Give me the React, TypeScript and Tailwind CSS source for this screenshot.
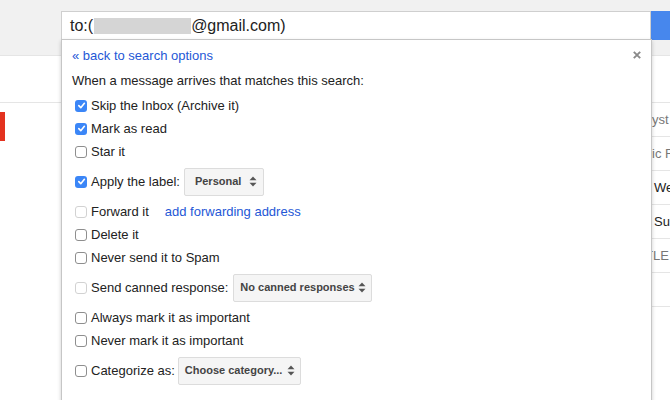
import React from "react";

type Opt = {
  label: string;
  checked?: boolean;
  disabled?: boolean;
  extra?: React.ReactNode;
  tall?: boolean;
};

function Box({ checked, disabled }: { checked?: boolean; disabled?: boolean }) {
  if (checked) {
    return (
      <span className="flex h-[12px] w-[12px] shrink-0 items-center justify-center rounded-[3px] bg-[#3b86f7]">
        <svg width="9" height="9" viewBox="0 0 10 10">
          <path d="M2 5.2 L4.2 7.4 L8.2 2.6" fill="none" stroke="#fff" strokeWidth="1.8" strokeLinecap="round" strokeLinejoin="round" />
        </svg>
      </span>
    );
  }
  return (
    <span
      className={
        disabled
          ? "h-[12px] w-[12px] shrink-0 rounded-[3px] border border-[#d2d2d2] bg-white"
          : "h-[12px] w-[12px] shrink-0 rounded-[3px] border border-[#8e8e8e] bg-white"
      }
    />
  );
}

function Select({ text, w, pl, pr }: { text: string; w: string; pl: string; pr: string }) {
  return (
    <div
      className={`flex h-[28px] items-center justify-between rounded-[2px] border border-[#dcdcdc] bg-[#f5f5f5] text-[11px] font-bold text-[#444] ${w} ${pl} ${pr}`}
    >
      <span>{text}</span>
      <svg width="8" height="11" viewBox="0 0 8 11">
        <path d="M4 0.5 L7.5 4.3 L0.5 4.3 Z" fill="#555" />
        <path d="M4 10.5 L7.5 6.7 L0.5 6.7 Z" fill="#555" />
      </svg>
    </div>
  );
}

const options: Opt[] = [
  { label: "Skip the Inbox (Archive it)", checked: true },
  { label: "Mark as read", checked: true },
  { label: "Star it" },
  {
    label: "Apply the label:",
    checked: true,
    tall: true,
    extra: (
      <div className="ml-[4px]">
        <Select text="Personal" w="w-[80px]" pl="pl-[10px]" pr="pr-[6px]" />
      </div>
    ),
  },
  {
    label: "Forward it",
    disabled: true,
    extra: <a className="ml-[16px] text-[#2457d6]">add forwarding address</a>,
  },
  { label: "Delete it" },
  { label: "Never send it to Spam" },
  {
    label: "Send canned response:",
    disabled: true,
    tall: true,
    extra: (
      <div className="ml-[5px]">
        <Select text="No canned responses" w="w-[139px]" pl="pl-[6px]" pr="pr-[5px]" />
      </div>
    ),
  },
  { label: "Always mark it as important" },
  { label: "Never mark it as important" },
  {
    label: "Categorize as:",
    tall: true,
    extra: (
      <div className="ml-[3px]">
        <Select text="Choose category..." w="w-[123px]" pl="pl-[6px]" pr="pr-[5px]" />
      </div>
    ),
  },
];

const listRows = [
  { text: "lyst", cls: "-ml-[2px] text-[#777]" },
  { text: "ic F", cls: "ml-[1px] text-[#777]" },
  { text: "We", cls: "ml-[3px] text-[#222]" },
  { text: "Su", cls: "ml-[3px] text-[#222]" },
  { text: "TLE", cls: "-ml-[6px] text-[#777]" },
  { text: "", cls: "" },
];

export default function App() {
  return (
    <div className="relative h-[400px] w-[670px] overflow-hidden bg-white font-['Liberation_Sans',Arial,sans-serif] text-[13px] text-[#222]">
      {/* header with search */}
      <header className="flex h-[56px] border-b border-[#e5e5e5] bg-[#f1f1f1] pl-[61px] pt-[11px]">
        <div className="flex h-[29px] w-[590px] items-center border border-[#cfcfcf] bg-white pl-[8px] text-[16px]">
          <span>to:(</span>
          <span className="ml-[1px] h-[16px] w-[97px] bg-[#d5d5d5]" />
          <span>@gmail.com)</span>
        </div>
        <div className="h-[29px] flex-1 bg-[#4787ed]" />
      </header>

      {/* page below */}
      <div className="flex">
        <div className="w-[61px] shrink-0">
          <div className="h-[47px] border-b border-[#e5e5e5]" />
          <div className="mt-[9px] h-[29px] w-[5px] bg-[#e3321f]" />
        </div>
        <div className="flex-1">
          <div className="h-[47px] border-b border-[#e5e5e5]" />
          {listRows.map((r, i) => (
            <div key={i} className="flex h-[34px] items-center overflow-hidden whitespace-nowrap border-b border-[#e5e5e5] pl-[590px] text-[13px]">
              <span className={r.cls}>{r.text}</span>
            </div>
          ))}
        </div>
      </div>

      {/* filter popup */}
      <div className="absolute left-[61px] top-[39px] h-[380px] w-[591px] border border-[#c6c6c6] bg-white pl-[10px] pt-[4px] shadow-[0_2px_4px_rgba(0,0,0,0.2)]">
        <button className="absolute right-[10px] top-[11px]">
          <svg width="8" height="8" viewBox="0 0 8 8">
            <path d="M0.8 0.8 L7.2 7.2 M7.2 0.8 L0.8 7.2" stroke="#8a8a8a" strokeWidth="1.9" />
          </svg>
        </button>
        <div className="flex h-[24px] items-center">
          <a className="text-[#2457d6]">« back to search options</a>
        </div>
        <div className="flex h-[26px] items-center">When a message arrives that matches this search:</div>
        {options.map((o) => (
          <div key={o.label} className={`flex items-center pl-[3px] ${o.tall ? "h-[37px]" : "h-[23px]"}`}>
            <Box checked={o.checked} disabled={o.disabled} />
            <span className="ml-[4px]">{o.label}</span>
            {o.extra}
          </div>
        ))}
      </div>
    </div>
  );
}
